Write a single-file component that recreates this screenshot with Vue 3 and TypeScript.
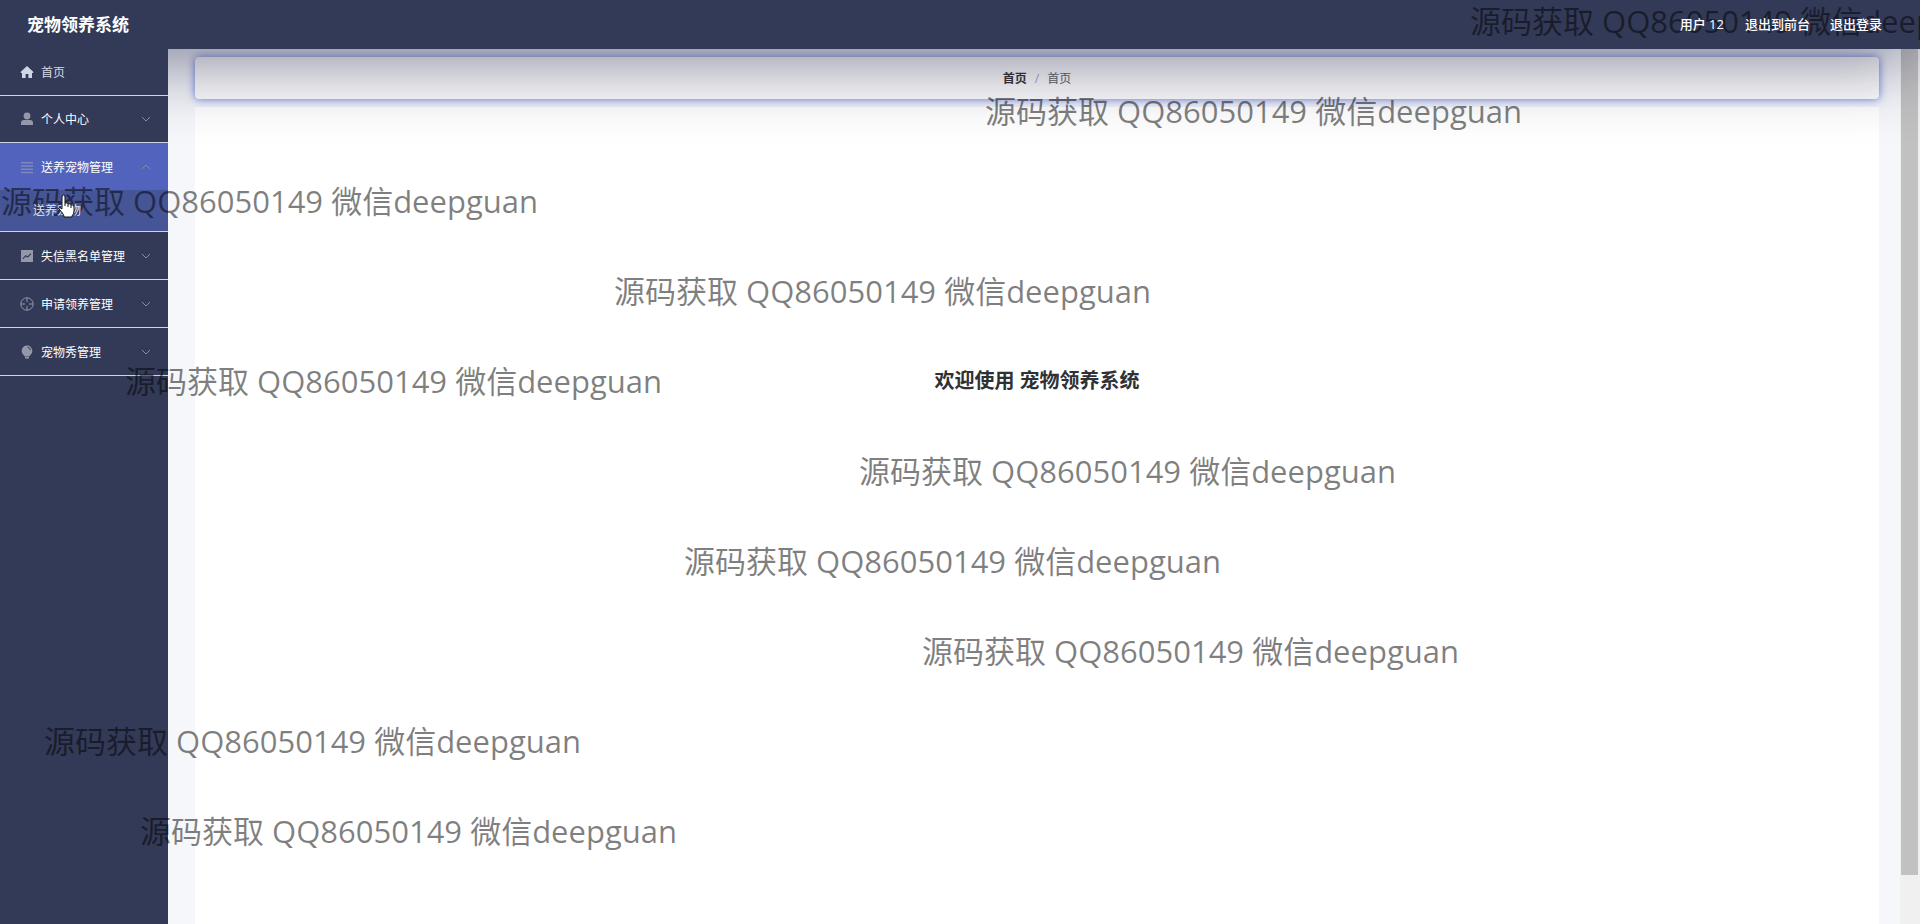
<script setup lang="ts">
interface MenuItem { label: string; icon: string; open?: boolean; children?: string[] }
interface Mark { x: number; y: number }

const menu: MenuItem[] = [
  { label: '个人中心', icon: 'user' },
  { label: '送养宠物管理', icon: 'list', open: true, children: ['送养宠物'] },
  { label: '失信黑名单管理', icon: 'chart' },
  { label: '申请领养管理', icon: 'aim' },
  { label: '宠物秀管理', icon: 'bulb' },
]
const marks: Mark[] = [
  { x: 1470, y: 0 }, { x: 985, y: 90 }, { x: 1, y: 180 }, { x: 614, y: 270 }, { x: 125, y: 360 },
  { x: 859, y: 450 }, { x: 684, y: 540 }, { x: 922, y: 630 }, { x: 44, y: 720 }, { x: 140, y: 810 },
]
</script>

<template>
  <div class="page">
    <header class="header">
      <h1 class="brand">宠物领养系统</h1>
      <nav class="account">
        <span>用户 12</span>
        <a href="#">退出到前台</a>
        <a href="#">退出登录</a>
      </nav>
    </header>

    <div class="body">
      <aside class="sidebar">
        <a class="item home" href="#">
          <svg class="icon" viewBox="0 0 14 14"><path d="M7 1 .8 6.800V8H2v5h3.600V9h2.800v4H12V8h1.200V6.800z" /></svg>
          <span>首页</span>
        </a>
        <div v-for="m in menu" :key="m.label" class="group" :class="{ open: m.open }">
          <button class="item" type="button" :aria-expanded="!!m.open">
            <svg class="icon" viewBox="0 0 14 14">
              <template v-if="m.icon === 'user'"><circle cx="7" cy="4" r="3.4" /><path d="M1 13v-2q0-3 3-3h6q3 0 3 3v2z" /></template>
              <path v-else-if="m.icon === 'list'" d="M1 2h12v1.500H1zM1 5.300h12v1.500H1zM1 8.600h12v1.500H1zM1 11.800h12v1.500H1z" />
              <path v-else-if="m.icon === 'chart'" fill-rule="evenodd" d="M1 1h12v12H1zM3 10.300l2.800-2.800 2 1.300 3.500-3.700-.8-.8-2.900 3-1.900-1.400L2.400 9.500z" />
              <g v-else-if="m.icon === 'aim'" fill="none" stroke="currentColor"><circle cx="7" cy="7" r="6.2" /><path d="M7 1v4M7 9v4M1 7h4M9 7h4" /></g>
              <path v-else fill-rule="evenodd" d="M7 .5a5.400 5.400 0 0 1 3 9.800l-.5 1.200h-5L4 10.300A5.400 5.400 0 0 1 7 .5zM5 12h4v1.500H5zM7.500 2v.8q2.100.3 2.500 2.500h.8Q10.400 2.300 7.500 2z" />
            </svg>
            <span>{{ m.label }}</span>
            <svg class="arrow" viewBox="0 0 10 10"><path :d="m.open ? 'M1 7l4-4 4 4' : 'M1 3l4 4 4-4'" /></svg>
          </button>
          <a v-for="c in m.children" :key="c" class="child" href="#">{{ c }}</a>
        </div>
      </aside>

      <main class="main">
        <nav class="crumbs" aria-label="breadcrumb">
          <a href="#">首页</a><span class="sep">/</span><span>首页</span>
        </nav>
        <section class="content"><h2>欢迎使用 宠物领养系统</h2></section>
      </main>
      <div class="track"><div class="thumb"></div></div>
    </div>

    <div class="marks" aria-hidden="true">
      <span v-for="p in marks" :key="p.y" class="mark" :style="{ left: p.x + 'px', top: p.y + 'px' }">源码获取 QQ86050149 微信deepguan</span>
    </div>
    <svg class="pointer" viewBox="0 0 18 24"><path d="M5 14V3q0-2 1.500-2T8 3v6q3-1 3 1 3-1 3 1 3-1 3 2v4q0 3-2 5v1H7v-1q-1-3-5-7-1-3 3 0z" /><path d="M8 9v3M11 10v3M14 11v3" /></svg>
  </div>
</template>

<style>
body { margin: 0; }
</style>

<style scoped>
.page {
  position: relative;
  display: flex;
  flex-direction: column;
  height: 100vh;
  overflow: hidden;
  background: #f5f7fa;
  font-family: "Open Sans", "Noto Sans CJK SC", sans-serif;
  font-size: 12px;
}
.page * { box-sizing: border-box; }
a { color: inherit; text-decoration: none; }
.header {
  position: relative;
  flex: none;
  display: flex;
  align-items: center;
  justify-content: space-between;
  height: 49px;
  padding: 0 38px 0 27px;
  background: #333a57;
  color: #fff;
  box-shadow: 0 0 80px rgba(36, 38, 72, 0.9);
}
.brand { margin: 0; font-size: 17px; line-height: 24px; }
.account { position: relative; z-index: 4; display: flex; gap: 20px; padding-bottom: 2px; font-size: 13px; font-weight: 500; }
.account span { margin-right: 1px; }
.body { flex: 1; display: flex; min-height: 0; }
.sidebar { position: relative; flex: none; width: 168px; background: #333a57; }
.item {
  display: flex;
  align-items: center;
  width: 100%;
  height: 47px;
  padding: 0 17px 0 20px;
  border: 0;
  border-bottom: 1px solid #d0d3e4;
  background: none;
  color: #fff;
  font: inherit;
  text-align: left;
}
.home { color: #d5d8e6; }
.item span { flex: 1; }
.icon { width: 14px; height: 14px; margin-right: 7px; fill: currentColor; color: #9498a8; }
.home .icon { color: #d0d5e4; }
.arrow { width: 10px; height: 10px; fill: none; stroke: #858a9d; }
.open { background: #465596; border-bottom: 1px solid #d0d3e4; }
.open .item { border: 0; background: #5263bd; }
.open .icon { color: #7f88b8; }
.open ~ .group .item { height: 48px; }
.child { position: relative; z-index: 4; display: block; height: 41px; padding-left: 33px; color: #e1e4f2; line-height: 41px; }
.main { flex: 1; display: flex; flex-direction: column; padding: 8px 21px 0 27px; min-width: 0; }
.crumbs {
  flex: none;
  display: flex;
  justify-content: center;
  align-items: center;
  gap: 8px;
  height: 42px;
  margin-bottom: 8px;
  border-radius: 4px;
  background: #fff;
  color: #606266;
  box-shadow: 0 0 8px #6678e0;
}
.crumbs a { color: #303133; font-weight: 700; }
.sep { color: #a8abb8; }
.content { flex: 1; padding-top: 257px; background: #fff; text-align: center; }
.content h2 { margin: 0; color: #303133; font-size: 20px; line-height: 34px; }
.track { flex: none; width: 20px; padding: 0 2px 49px 1px; background: #f0f0f0; }
.thumb { height: 100%; background: #c1c1c1; }
.marks { position: absolute; z-index: 3; inset: 0; overflow: hidden; pointer-events: none; }
.mark { position: absolute; color: rgba(0, 0, 0, 0.5); font-size: 31px; line-height: 42px; white-space: nowrap; }
.pointer { position: absolute; z-index: 5; left: 57px; top: 194px; width: 18px; height: 24px; fill: #fff; stroke: #111; }
</style>
